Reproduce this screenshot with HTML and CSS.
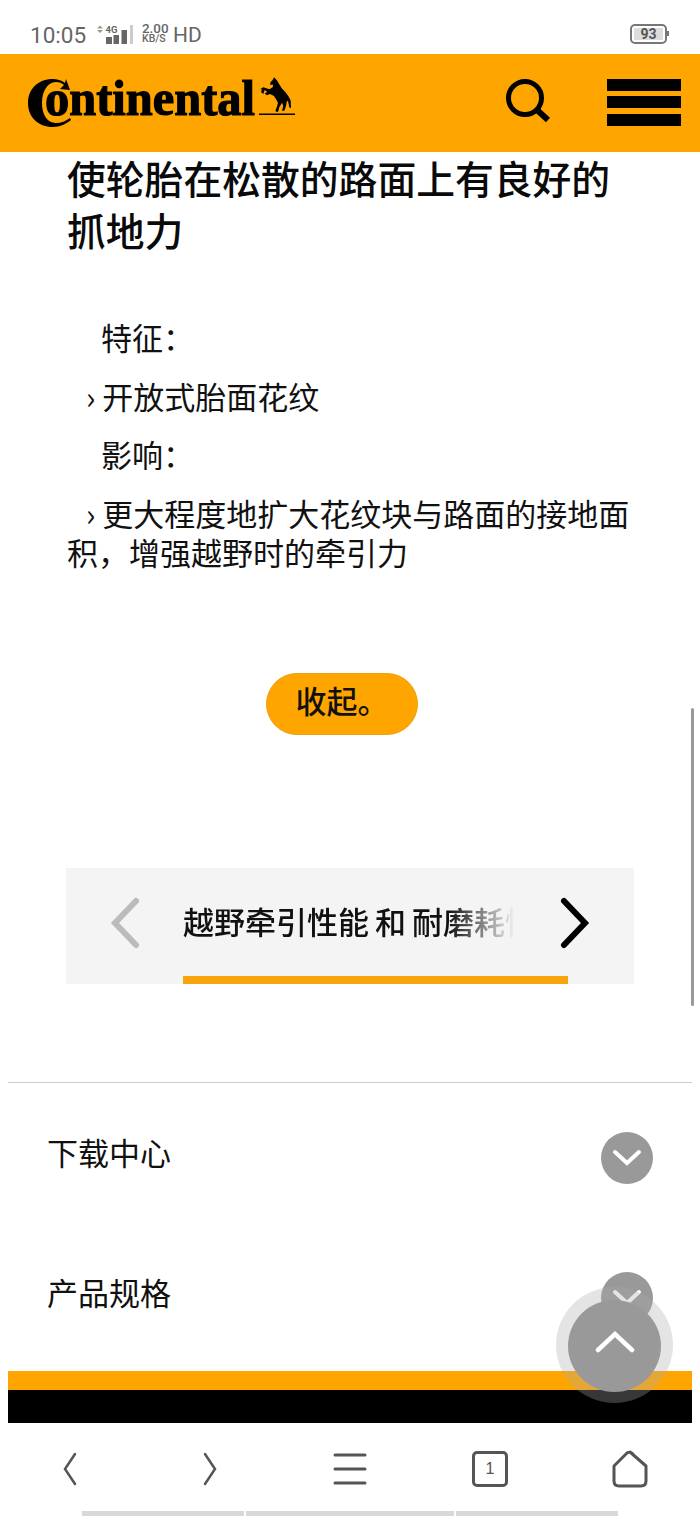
FILE: index.html
```html
<!DOCTYPE html>
<html lang="zh-CN">
<head>
<meta charset="utf-8">
<title>Continental</title>
<link rel="stylesheet" href="styles.css">
</head>
<body>
<div class="phone">
  <div class="status">
    <span class="time">10:05</span>
    <svg class="signal" width="36" height="24" viewBox="0 0 36 24">
      <path d="M0 6.500 3 3.500 6 6.500ZM0 8 6 8 3 11Z" fill="#999"/>
      <text x="8.500" y="11" class="net">4G</text>
      <rect x="9" y="15" width="6" height="7" fill="#666"/>
      <rect x="16.500" y="13" width="5.500" height="9" fill="#666"/>
      <rect x="24.500" y="8" width="5.500" height="14" fill="#666"/>
      <rect x="33" y="3" width="3.500" height="19" fill="#ccc"/>
    </svg>
    <span class="speed"><b>2.00</b><b>KB/S</b></span>
    <span class="hd">HD</span>
    <span class="battery"><span class="level">93</span></span>
  </div>
  <header class="topbar">
    <svg class="logo" width="272" height="52" viewBox="0 0 272 52">
      <path d="M27 3C12 3 2 13 2 27C2 41 12 51 27 51C34 51 40 48 45 44L44 42C40 45 35 47 30 47C20 47 16 37 16 27C16 16 21 6 30 6C33 6 36 7 38 9L34 13 44 14 40 3 39 7C35 4 31 3 27 3Z" fill="#000"/>
      <text x="19" y="39" class="wordmark" textLength="210" lengthAdjust="spacingAndGlyphs">ontinental</text>
      <path d="M248 1.300 250.700 4 252.700 7.300 255.700 12.300 260 16.700 262.700 20.700 264.700 24.700 265 32.300 263.300 31.300 262 24.700 260.700 25.700 260 30 258.300 34.700 256 34.700 257.300 30 256 26.700 253.300 31.300 252 36 249.300 35.300 250.700 31.300 252 26.700 250 23.300 248 20 244 18 240.700 19.300 238.700 17.300 241.300 16 238.700 14 237.300 18 235 16 236 13.300 234 13.300 237.300 11.300 243.300 13.300 246.700 11.300 247.300 8.700 244 8.700 244.700 6 246.700 4Z" fill="#000"/>
      <rect x="233" y="37.500" width="36" height="1.500" fill="#000"/>
    </svg>
    <svg class="search" width="46" height="44" viewBox="0 0 46 44">
      <circle cx="19" cy="19" r="16.500" fill="none" stroke="#000" stroke-width="5"/>
      <path d="M31 31 42 41" stroke="#000" stroke-width="6" fill="none"/>
    </svg>
    <div class="burger"><i></i><i></i><i></i></div>
  </header>
  <main class="page">
    <h2 class="headline">使轮胎在松散的路面上有良好的抓地力</h2>
    <div class="copy">
      <p class="label">特征：</p>
      <p class="item">› 开放式胎面花纹</p>
      <p class="label">影响：</p>
      <p class="item long">› 更大程度地扩大花纹块与路面的接地面积，增强越野时的牵引力</p>
    </div>
    <div class="btn-row"><span class="collapse">收起。</span></div>
    <section class="tabs">
      <svg class="arrow" width="34" height="52" viewBox="0 0 34 52"><path d="M27 4 6 26 27 48" fill="none" stroke="#bbb" stroke-width="6" stroke-linecap="round"/></svg>
      <div class="tab">
        <span class="tab-text">越野牵引性能 和 耐磨耗性</span>
        <span class="tab-line"></span>
      </div>
      <svg class="arrow next" width="34" height="52" viewBox="0 0 34 52"><path d="M7 4 28 26 7 48" fill="none" stroke="#000" stroke-width="6" stroke-linecap="round"/></svg>
    </section>
    <div class="accordion">
      <div class="row"><span>下载中心</span><span class="disc"><svg width="32" height="20" viewBox="0 0 32 20"><path d="M4 4 16 15 28 4" fill="none" stroke="#fff" stroke-width="4" stroke-linecap="round"/></svg></span></div>
      <div class="row"><span>产品规格</span><span class="disc"><svg width="32" height="20" viewBox="0 0 32 20"><path d="M4 4 16 15 28 4" fill="none" stroke="#fff" stroke-width="4" stroke-linecap="round"/></svg></span></div>
    </div>
    <footer class="foot"></footer>
  </main>
  <nav class="browser">
    <svg width="20" height="34" viewBox="0 0 20 34"><path d="M15 2 5 17 15 32" fill="none" stroke="#555" stroke-width="2.500" stroke-linecap="round"/></svg>
    <svg class="nav-forward" width="20" height="34" viewBox="0 0 20 34"><path d="M5 2 15 17 5 32" fill="none" stroke="#555" stroke-width="2.500" stroke-linecap="round"/></svg>
    <svg class="nav-menu" width="34" height="34" viewBox="0 0 34 34"><path d="M2 3H32M2 17H32M2 31H32" fill="none" stroke="#555" stroke-width="3" stroke-linecap="round"/></svg>
    <span class="tabs-count">1</span>
    <svg class="nav-home" width="40" height="40" viewBox="0 0 40 40"><path d="M20 3 36 17V32Q36 37 31 37H9Q4 37 4 32V17L17 4Q20 2 23 5Z" fill="none" stroke="#555" stroke-width="3" stroke-linejoin="round"/></svg>
  </nav>
  <div class="handle"><i></i><i></i><i></i></div>
  <div class="scroll-thumb"></div>
  <div class="fab-ring"></div>
  <div class="fab"><svg width="40" height="24" viewBox="0 0 40 24"><path d="M3 20 20 4 37 20" fill="none" stroke="#fff" stroke-width="4.500" stroke-linecap="round"/></svg></div>
</div>
</body>
</html>
```
FILE: styles.css
```css
* { box-sizing: border-box; }
html, body { margin: 0; padding: 0; background: #fff; }
body { font-family: "Noto Sans CJK SC", "Noto Sans", sans-serif; color: #111; }
.phone { position: relative; width: 700px; height: 1516px; overflow: hidden; background: #fff; }

.status { height: 54px; display: flex; align-items: center; padding: 14px 33px 0 30px; color: #666; font-family: Roboto, sans-serif; }
.time { font-size: 22.500px; width: 67px; margin-top: 2px; }
.signal { margin-right: 9px; flex: none; }
.net { font: 700 9.500px Roboto, sans-serif; fill: #666; }
.speed { display: flex; flex-direction: column; width: 28px; font-size: 10.500px; line-height: 10px; }
.speed b { font-weight: 500; white-space: nowrap; }
.speed b:first-child { font-size: 13.400px; }
.hd { font-size: 21px; margin-left: 3px; margin-top: 2px; }
.battery { margin-left: auto; width: 37px; height: 20px; border: 2px solid #777; border-radius: 5px; padding: 2px; position: relative; }
.battery::after { content: ""; position: absolute; right: -4px; top: 5px; width: 2px; height: 5px; background: #777; }
.level { display: block; width: 100%; height: 100%; background: #ddd; font: 700 14px/12px Roboto, sans-serif; color: #555; text-align: center; }

.topbar { height: 98px; background: #ffa500; display: flex; align-items: center; padding-left: 26px; }
.logo { margin-top: -2px; flex: none; }
.wordmark { font: 700 50px "Liberation Serif", serif; fill: #000; stroke: #000; stroke-width: 1.200px; }
.search { margin-left: 208px; margin-top: -4px; flex: none; }
.burger { margin-left: 55px; width: 74px; height: 47px; display: flex; flex-direction: column; justify-content: space-between; margin-top: -2px; }
.burger i { display: block; height: 12px; background: #000; }

.page { height: 1271px; padding: 0 8px; overflow: hidden; }
.headline { margin: -1px 0 0; padding: 0 59px; font-size: 38.800px; line-height: 52px; font-weight: 500; color: #0a0a0a; }
.copy { margin-top: 62px; padding: 0 59px; font-size: 31px; line-height: 39px; }
.copy p { margin: 0 0 19.500px; }
.label { padding-left: 34px; }
.item { padding-left: 0; text-indent: 19px; }
.btn-row { display: flex; justify-content: center; padding: 83px 16px 0 0; }
.collapse { width: 152px; height: 62px; border-radius: 31px; background: #ffa500; border: 1px solid #f0a010; font-size: 31px; font-weight: 500; line-height: 52px; text-align: center; color: #111; }
.tabs { margin: 133px 0 0 58px; width: 568px; height: 116px; background: #f4f4f4; display: flex; align-items: flex-start; padding: 30px 0 0 43px; position: relative; }
.arrow { flex: none; margin-top: -1px; }
.tab { width: 385px; margin-left: 40px; position: relative; height: 86px; }
.tab-text { display: block; width: 332px; overflow: hidden; white-space: nowrap; font-size: 31px; font-weight: 500; line-height: 46px; word-spacing: -1px; color: #111; -webkit-mask-image: linear-gradient(90deg, #000 80%, transparent 100%); mask-image: linear-gradient(90deg, #000 80%, transparent 100%); }
.tab-line { position: absolute; left: 0; right: 0; bottom: 0; height: 8px; background: #f8a50c; }
.next { margin-left: -11px; }

.accordion { margin-top: 98px; border-top: 1px solid #ccc; padding: 0 39px 0 39px; height: 289px; }
.row { display: flex; justify-content: space-between; align-items: center; font-size: 31px; height: 52px; margin-top: 49px; color: #111; }
.row + .row { margin-top: 88px; }
.row span:first-child { margin-top: -14px; }
.disc { width: 52px; height: 52px; border-radius: 50%; background: #999; display: flex; align-items: center; justify-content: center; }
.foot { height: 52px; background: linear-gradient(#ffa500 0 19px, #000 19px); }

.browser { height: 88px; display: flex; align-items: center; padding: 4px 0 0 60px; }
.nav-forward { margin-left: 120px; }
.nav-menu { margin-left: 113px; }
.tabs-count { margin-left: 105px; width: 36px; height: 36px; border: 3px solid #555; border-radius: 5px; text-align: center; font: 16px/30px "Liberation Sans", sans-serif; color: #555; }
.nav-home { margin-left: 102px; }
.handle { position: absolute; left: 82px; bottom: 0; display: flex; gap: 2px; height: 5px; }
.handle i { display: block; background: #d8d8d8; width: 162px; }
.handle i:nth-child(2) { width: 208px; }
.scroll-thumb { position: absolute; left: 691px; top: 708px; width: 3px; height: 298px; background: #999; border-radius: 2px; }
.fab-ring { position: absolute; left: 556px; top: 1287px; width: 117px; height: 116px; border-radius: 50%; background: rgba(170,170,170,.32); }
.fab { position: absolute; left: 568px; top: 1300px; width: 93px; height: 92px; border-radius: 50%; background: #999; display: flex; align-items: center; justify-content: center; padding-bottom: 8px; }
```
